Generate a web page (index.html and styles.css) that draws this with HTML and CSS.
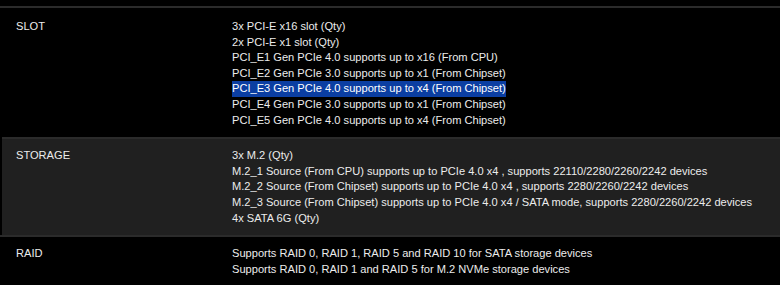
FILE: index.html
```html
<!DOCTYPE html>
<html>
<head>
<meta charset="utf-8">
<link rel="stylesheet" href="styles.css">
</head>
<body>
<div class="spec">
  <div class="row first">
    <div class="label">SLOT</div>
    <div class="value">
      <div>3x PCI-E x16 slot (Qty)</div>
      <div>2x PCI-E x1 slot (Qty)</div>
      <div>PCI_E1 Gen PCIe 4.0 supports up to x16 (From CPU)</div>
      <div>PCI_E2 Gen PCIe 3.0 supports up to x1 (From Chipset)</div>
      <div><span class="sel">PCI_E3 Gen PCIe 4.0 supports up to x4 (From Chipset)</span></div>
      <div>PCI_E4 Gen PCIe 3.0 supports up to x1 (From Chipset)</div>
      <div>PCI_E5 Gen PCIe 4.0 supports up to x4 (From Chipset)</div>
    </div>
  </div>
  <div class="row alt">
    <div class="label">STORAGE</div>
    <div class="value">
      <div>3x M.2 (Qty)</div>
      <div>M.2_1 Source (From CPU) supports up to PCIe 4.0 x4 , supports 22110/2280/2260/2242 devices</div>
      <div>M.2_2 Source (From Chipset) supports up to PCIe 4.0 x4 , supports 2280/2260/2242 devices</div>
      <div>M.2_3 Source (From Chipset) supports up to PCIe 4.0 x4 / SATA mode, supports 2280/2260/2242 devices</div>
      <div>4x SATA 6G (Qty)</div>
    </div>
  </div>
  <div class="row">
    <div class="label">RAID</div>
    <div class="value">
      <div>Supports RAID 0, RAID 1, RAID 5 and RAID 10 for SATA storage devices</div>
      <div>Supports RAID 0, RAID 1 and RAID 5 for M.2 NVMe storage devices</div>
    </div>
  </div>
</div>
</body>
</html>
```

FILE: styles.css
```css
html, body {
  margin: 0;
  padding: 0;
  background: #000;
}
body {
  font-family: "Liberation Sans", Arial, sans-serif;
  font-size: 11.1px;
  line-height: 15.6px;
  color: #ececec;
}
.spec {
  padding-top: 6px;
}
.row {
  display: flex;
  border-top: 2px solid #2b2b2b;
  padding: 9px 0 10px 0;
}
.row.first {
  padding-top: 11px;
  padding-bottom: 9px;
}
.row.alt {
  background: #202020;
  margin-left: 2px;
  padding-top: 9px;
  padding-bottom: 9px;
}
.label {
  width: 216px;
  padding-left: 16px;
  flex: none;
}
.row.alt .label {
  padding-left: 14px;
}
.value {
  flex: 1;
}
.sel {
  display: inline-block;
  background: #0b3ea2;
  color: #fff;
}
```
